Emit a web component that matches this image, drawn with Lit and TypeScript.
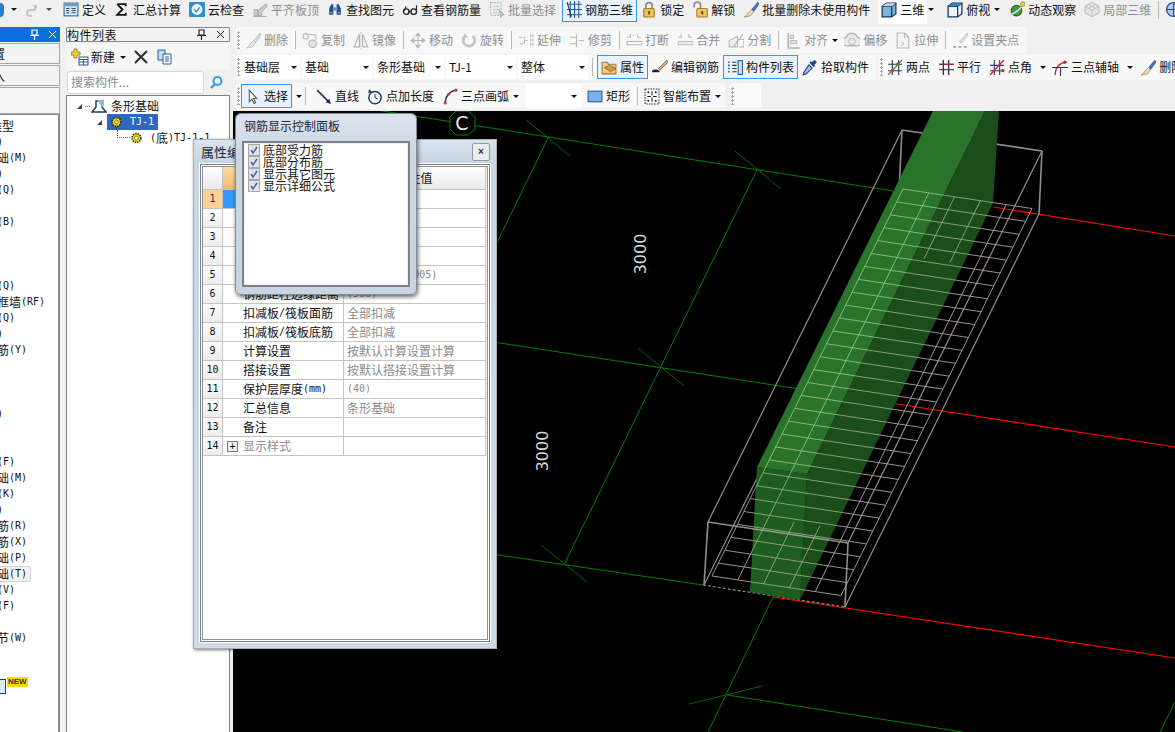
import { LitElement, html, css, svg } from 'lit';
import { customElement } from 'lit/decorators.js';

// 15x16 toolbar icons
const ICONS: Record<string, unknown> = {
  define: svg`<rect x="1" y="2" width="13" height="12" fill="#dce8f4" stroke="#2f5f94"/><rect x="1" y="2" width="13" height="3" fill="#6f9bc8"/><path d="M3 7h3M3 9h3M3 11h3M8 7h4M8 9h4M8 11h4" stroke="#26496f"/>`,
  sigma: svg`<path d="M3 3h8v2M3 3l5 5-5 5h8v-2" fill="none" stroke="#111" stroke-width="1.7"/>`,
  cloud: svg`<rect x="0" y="1" width="15" height="14" rx="1" fill="#2a8ed6"/><circle cx="7.5" cy="8" r="4.6" fill="#e8f4fc" stroke="#fff"/><path d="M5 8l2 2 3-4" fill="none" stroke="#2a8ed6" stroke-width="1.4"/>`,
  level: svg`<path d="M2 14V8h3v6zM6 14V9l7-6 1 2-5 5v4z" fill="#cfd2d0" stroke="#a9adab"/><path d="M1 14.5h13" stroke="#a9adab"/>`,
  binoc: svg`<path d="M2 13V7l2-4h2v10zM9 13V3h2l2 4v6z" fill="#234f9a"/><rect x="6" y="6" width="3" height="3" fill="#6d88b8"/><path d="M3 11h2M10 11h2" stroke="#b7c7e2"/>`,
  glasses: svg`<circle cx="4" cy="10" r="2.6" fill="none" stroke="#222" stroke-width="1.3"/><circle cx="11" cy="10" r="2.6" fill="none" stroke="#222" stroke-width="1.3"/><path d="M6.5 10h2M2 9l2-4M13.6 9V4" stroke="#222"/>`,
  batch: svg`<rect x="1.5" y="1.5" width="10" height="12" fill="#eee" stroke="#b9bcbe" stroke-dasharray="2 1"/><path d="M4 5h6M4 8h6M4 11h6" stroke="#c5c8ca"/><path d="M10 9l4 4-2 .5-1 2z" fill="#d4d6d8" stroke="#aaa"/>`,
  rebar: svg`<path d="M1 3h14M1 8h14M1 13h14M4 0v16M8 0v16M12 0v16" stroke="#1c5aa6" stroke-width="1"/><path d="M1 1l4 14" stroke="#333"/>`,
  lock: svg`<path d="M4.5 7V4.5a3 3 0 0 1 6 0V7" fill="none" stroke="#8a8f94" stroke-width="1.6"/><rect x="2.5" y="7" width="10" height="8" rx="1" fill="#e9c261" stroke="#a97d1c"/><rect x="6.7" y="9.5" width="1.8" height="3" fill="#6b4a10"/>`,
  unlock: svg`<path d="M2 6V4a3 3 0 0 1 6 0v3" fill="none" stroke="#8a8f94" stroke-width="1.6"/><rect x="4.5" y="7" width="10" height="8" rx="1" fill="#e9c261" stroke="#a97d1c"/><rect x="8.7" y="9.5" width="1.8" height="3" fill="#6b4a10"/>`,
  brush: svg`<path d="M14 1l-6 7 2 2 5-7z" fill="#4c74c4" stroke="#2d4c8a" stroke-width=".6"/><path d="M8 8l2 2-3 4-6 1c3-1 3-4 7-7z" fill="#e9d9b8" stroke="#a4855a" stroke-width=".7"/>`,
  cube: svg`<path d="M1 5l4-3h9v10l-4 3H1z" fill="#7fb3dc" stroke="#17365f" stroke-width="1.2"/><path d="M1 5h9v10M10 5l4-3" fill="none" stroke="#17365f" stroke-width="1.2"/><path d="M5 2h9l-4 3H1z" fill="#b7d6ee"/>`,
  cubeo: svg`<path d="M1 5l4-3h9v10l-4 3H1z" fill="#eaf3fa" stroke="#17365f" stroke-width="1.2"/><path d="M1 5h9v10M10 5l4-3" fill="none" stroke="#17365f" stroke-width="1.2"/><path d="M5 2h9l-4 3H1z" fill="#3f84bf"/>`,
  orbit: svg`<circle cx="7" cy="9" r="5" fill="#3f9b3a" stroke="#1d5d1b"/><path d="M1 13C5 12 10 8 14 3" fill="none" stroke="#c9d9ee" stroke-width="1.6"/><circle cx="13" cy="3" r="2.2" fill="#e8d23f" stroke="#8f7d12" stroke-width=".6"/>`,
  local: svg`<path d="M7.5 1l6.5 4v6l-6.5 4L1 11V5z" fill="#e6e6e6" stroke="#bdbdbd"/><path d="M1 5l6.5 4L14 5M7.5 9v6M4 3l7 4M11 3L4 7" fill="none" stroke="#c6c6c6"/>`,
  globe: svg`<circle cx="8" cy="8" r="6.5" fill="#b6cbe8" stroke="#2a4f8f" stroke-width="1.3"/><path d="M8 2v12M2 8h12" stroke="#2a4f8f"/>`,
  gbrush: svg`<path d="M14 1l-6 7 2 2 5-7z" fill="#d9dbdc" stroke="#b2b5b7" stroke-width=".7"/><path d="M8 8l2 2-3 4-6 1c3-1 3-4 7-7z" fill="#e3e4e4" stroke="#b4b6b7" stroke-width=".7"/>`,
  gcopy: svg`<circle cx="3.5" cy="4" r="2.5" fill="none" stroke="#b4b6b8"/><circle cx="10" cy="11" r="3.5" fill="#e4e5e6" stroke="#a9acae"/><path d="M7 2l6 1v4" fill="none" stroke="#b4b6b8"/>`,
  gmirror: svg`<path d="M1 14L6 2v12zM14 14L9 2v12z" fill="#eeeeee" stroke="#b2b5b7"/><path d="M7.5 0v16" stroke="#c3c5c7" stroke-dasharray="2 1"/>`,
  gmove: svg`<path d="M7.5 1v14M1 8h13M7.5 1L5.5 3.5h4zM7.5 15l-2-2.5h4zM1 8l2.500-2v4zM14 8l-2.500-2v4z" fill="#bfc2c4" stroke="#b4b7b9"/>`,
  grotate: svg`<path d="M4 3.500a5.500 5.500 0 1 0 7 0" fill="none" stroke="#c3c5c6" stroke-width="2.600"/><path d="M3 1v4h4z" fill="#bfc1c3"/>`,
  gextend: svg`<path d="M1 5h5v6H1M6 8h4M12 2v12M14 2v12" fill="none" stroke="#b4b7b9" stroke-dasharray="3 1"/>`,
  gtrim: svg`<path d="M1 5h6M1 11h6M7 2v12M9 8h5" fill="none" stroke="#b4b7b9"/>`,
  gbreak: svg`<path d="M4 2v3H1M11 2v3h3M1 9h14v3H1z" fill="none" stroke="#b6b9bb"/><path d="M6 3h3" stroke="#b6b9bb" stroke-dasharray="1 1"/>`,
  gmerge: svg`<path d="M4 2v3H1M11 2v3h3M1 9h14v3H1z" fill="#ececec" stroke="#bcbfc1"/>`,
  gsplit: svg`<path d="M1 14V8l8-4v10z" fill="#ececec" stroke="#b8babc"/><path d="M5 14l9-12M11 7h4v7h-4" fill="none" stroke="#b0b3b5"/>`,
  galign: svg`<path d="M3 1v14h11" fill="none" stroke="#aeb1b3" stroke-width="1.400"/><path d="M5 3h3v3H5zM5 8h6v3H5z" fill="#dfe0e1" stroke="#b8babc"/>`,
  goffset: svg`<path d="M3 13a4 4 0 0 1-1-8 5.500 5.500 0 0 1 10.500 0 4 4 0 0 1-.500 8z" fill="#e8e9e9" stroke="#b3b6b8" stroke-width="1.300"/><circle cx="7.500" cy="9" r="3" fill="none" stroke="#c2c4c6"/>`,
  gstretch: svg`<path d="M2 1h7l4 4v10H2z" fill="#f5f5f5" stroke="#b5b8ba"/><path d="M9 1v4h4M6 9l2 2-2 2" fill="none" stroke="#bcbfc1"/>`,
  ggrip: svg`<path d="M14 1l-7 8 1.500 1.500L15 3z" fill="#dfe0e1" stroke="#b6b9bb" stroke-width=".7"/><path d="M1 14h3M6 14h3M11 14h3" stroke="#a9acae" stroke-width="1.500"/>`,
  props: svg`<path d="M1 3h5l1 2h7v9H1z" fill="#f3cb84" stroke="#9b7a43"/><path d="M3 8l5-2 6 3-5 3z" fill="#c99a3f" stroke="#7c5a1c" stroke-width=".7"/>`,
  edit: svg`<path d="M14 1l-8 8 1.500 1.500L15 3z" fill="#d8b27a" stroke="#6d5530" stroke-width=".7"/><path d="M0 11c3-2 5-1 7 0v1.500H0z" fill="#222"/>`,
  list: svg`<path d="M1 3h2M1 6h2M1 9h2M1 12h2" stroke="#2a5d9e" stroke-width="1.500" stroke-dasharray="1.500 .8"/><path d="M5 3h4M5 6h4M5 9h4M5 12h4" stroke="#333"/><rect x="10.500" y="1.500" width="4" height="13" fill="#cfe0f1" stroke="#2a5d9e"/>`,
  dropper: svg`<path d="M12 1l2 2-2.500 2.500 1 1-1.500 1-4-4 1-1.500 1 1z" fill="#1c3f8a"/><path d="M6.500 5.500l3 3L4 14l-3 1 1-3z" fill="#9cc4ec" stroke="#1c3f8a"/>`,
  twopt: svg`<path d="M1 5h13M1 11h13M5 1v14M11 1v14" stroke="#1f2f55"/><path d="M1 15L14 1" stroke="#c22"/><circle cx="10" cy="5" r="1.600" fill="#3d8a2c"/><circle cx="5" cy="11" r="1.600" fill="#3d8a2c"/>`,
  parallel: svg`<path d="M1 5h14M1 10h14" stroke="#b12a2a" stroke-width="1.300"/><path d="M5 1v14M10 1v14" stroke="#22376a" stroke-width="1.300"/>`,
  angle: svg`<path d="M1 6h13M1 11h13M5 1v14M10 1v14" stroke="#22376a"/><path d="M1 15L14 1" stroke="#d22" stroke-width="1.300"/><circle cx="13" cy="11" r="1.500" fill="#d22"/>`,
  arcaxis: svg`<path d="M3 15C3 8 7 3 14 3" fill="none" stroke="#c22" stroke-width="1.300"/><path d="M0 8h15M8 8v8" stroke="#22376a"/><circle cx="12" cy="3" r="1.500" fill="#d22"/>`,
  cursor: svg`<path d="M4 2v11l2.500-2.500 2 4 1.500-.8-2-3.900H11z" fill="#fff" stroke="#555"/>`,
  line: svg`<path d="M1 2l12 12" stroke="#1f2f55" stroke-width="1.400"/><path d="M14 15l-5-1.500 3.500-3.500z" fill="#1f2f55"/>`,
  ptlen: svg`<circle cx="7.500" cy="9" r="5.800" fill="#fff" stroke="#22376a" stroke-width="1.400"/><path d="M7.500 5.500V9l2.500 1.500" fill="none" stroke="#22376a"/><path d="M2 1l3 3-4 1z" fill="#22376a"/>`,
  arc3: svg`<path d="M3 14C3 8 7 3 13 2" fill="none" stroke="#22376a" stroke-width="1.400"/><circle cx="3" cy="14" r="1.500" fill="#d33"/><circle cx="6" cy="6" r="1.300" fill="#d33"/><circle cx="13" cy="2" r="1.500" fill="#d33"/>`,
  rect: svg`<rect x="1" y="3" width="13" height="10" fill="#7fb0e6" stroke="#2a5aa8"/>`,
  smart: svg`<rect x="1" y="1" width="13" height="14" fill="#fff" stroke="#333" stroke-dasharray="1.500 1"/><path d="M7.500 3v4M7.500 9v4M3 8h3.500M8.500 8H12" stroke="#222"/><circle cx="4" cy="4" r="1" fill="#222"/><circle cx="11" cy="4" r="1" fill="#222"/><circle cx="4" cy="12" r="1" fill="#222"/><circle cx="11" cy="12" r="1" fill="#222"/>`,
  gear: svg`<circle cx="7.500" cy="8" r="6" fill="#f6d80f" stroke="#33330c" stroke-width="2.200" stroke-dasharray="2 1.200"/><circle cx="7.500" cy="8" r="2.600" fill="#fff6a8" stroke="#6b6512"/>`,
};

type Item = { i?: string; t?: string; off?: boolean; sep?: boolean; arrow?: boolean; sel?: boolean; c?: string };

const ROW1: Item[] = [
  { i: 'define', t: '定义', c: 'g1' }, { i: 'sigma', t: '汇总计算' }, { i: 'cloud', t: '云检查' },
  { i: 'level', t: '平齐板顶', off: true }, { i: 'binoc', t: '查找图元' }, { i: 'glasses', t: '查看钢筋量' },
  { i: 'batch', t: '批量选择', off: true }, { i: 'rebar', t: '钢筋三维', sel: true, c: 'm2' },
  { i: 'lock', t: '锁定' }, { i: 'unlock', t: '解锁' }, { i: 'brush', t: '批量删除未使用构件' },
  { i: 'cube', t: '三维', c: 'wht g3' }, { arrow: true }, { i: 'cubeo', t: '俯视', c: 'g9' }, { arrow: true },
  { i: 'orbit', t: '动态观察', c: 'g5' }, { i: 'local', t: '局部三维', off: true }, { sep: true }, { i: 'globe' },
];

const ROW2: Item[] = [
  { i: 'gbrush', t: '删除', off: true, c: 'g4' }, { sep: true }, { i: 'gcopy', t: '复制', off: true },
  { i: 'gmirror', t: '镜像', off: true }, { sep: true }, { i: 'gmove', t: '移动', off: true },
  { i: 'grotate', t: '旋转', off: true }, { sep: true }, { i: 'gextend', t: '延伸', off: true },
  { i: 'gtrim', t: '修剪', off: true }, { sep: true }, { i: 'gbreak', t: '打断', off: true },
  { i: 'gmerge', t: '合并', off: true }, { i: 'gsplit', t: '分割', off: true }, { sep: true },
  { i: 'galign', t: '对齐', off: true }, { arrow: true }, { i: 'goffset', t: '偏移', off: true, c: 'g2' },
  { i: 'gstretch', t: '拉伸', off: true }, { sep: true }, { i: 'ggrip', t: '设置夹点', off: true },
];

const ROW3A: Item[] = [
  { i: 'props', t: '属性', sel: true }, { i: 'edit', t: '编辑钢筋' }, { i: 'list', t: '构件列表', sel: true },
  { i: 'dropper', t: '拾取构件' },
];

const ROW3B: Item[] = [
  { i: 'twopt', t: '两点', c: 'g3' }, { i: 'parallel', t: '平行' }, { i: 'angle', t: '点角' },
  { arrow: true, c: 'g4' }, { i: 'arcaxis', t: '三点辅轴', c: 'g2' }, { arrow: true, c: 'g4' },
  { i: 'brush', t: '删除辅轴', c: 'g3' },
];

const ROW4A: Item[] = [
  { i: 'cursor', t: '选择', sel: true, c: 'first' }, { arrow: true, c: 'g4' }, { sep: true },
  { i: 'line', t: '直线', c: 'g4' }, { i: 'ptlen', t: '点加长度' }, { i: 'arc3', t: '三点画弧' }, { arrow: true },
];

const ROW4B: Item[] = [
  { i: 'rect', t: '矩形' }, { sep: true }, { i: 'smart', t: '智能布置' }, { arrow: true },
];

const COMBOS: [string, number][] = [['基础层', 59], ['基础', 70], ['条形基础', 70], ['TJ-1', 70], ['整体', 70]];

// rows of the clipped module list, keyed by row index; value is [text, right edge]
const NAV: Record<number, [string, number]> = {
  0: ['构件类型', 14], 1: ['柱(Z)', 3], 2: ['筏板基础(M)', 27], 3: ['梁(L)', 3], 4: ['连梁(Q)', 15], 6: ['板(B)', 15],
  10: ['墙(Q)', 15], 11: ['砌体框墙(RF)', 45], 12: ['暗梁(Q)', 15], 13: ['门(M)', 3], 14: ['加筋(Y)', 27], 18: ['窗(C)', 3],
  21: ['基础(F)', 15], 22: ['筏板基础(M)', 27], 23: ['基坑(K)', 15], 24: ['柱(Y)', 3], 25: ['主筋(R)', 27],
  26: ['负筋(X)', 27], 27: ['板基础(P)', 27], 28: ['条形基础(T)', 27], 29: ['承台(V)', 15], 30: ['基础(F)', 15], 32: ['节(W)', 27],
};

const PROPS: [string, string, boolean?][] = [
  ['名称', 'TJ-1'], ['类别', '条形基础'], ['截面宽度(mm)', '(1000)'], ['截面高度(mm)', '(300)'],
  ['受力筋配置', '(0.5+0.5+0.005)'], ['钢筋距柱边缘距离', '(500)'],
  ['扣减板/筏板面筋', '全部扣减'], ['扣减板/筏板底筋', '全部扣减'], ['计算设置', '按默认计算设置计算'],
  ['搭接设置', '按默认搭接设置计算'], ['保护层厚度(mm)', '(40)'], ['汇总信息', '条形基础'], ['备注', ''],
  ['显示样式', '', true],
];

const CHECKS = ['底部受力筋', '底部分布筋', '显示其它图元', '显示详细公式'];

// wrap ascii runs so they sit on the half-width grid of the CJK text
const mix = (text: string) =>
  text.split(/([\x20-\x7e]+)/).map((p) => (/^[\x20-\x7e]+$/.test(p) ? html`<span class="m">${p}</span>` : p));

@customElement('app-root')
export class AppRoot extends LitElement {
  static styles = css`
    :host {
      display: block;
      width: 1175px;
      height: 732px;
      position: relative;
      overflow: hidden;
      background: #f0f0f0;
      color: #111;
      font: 12px/1 'Noto Sans CJK SC', 'Liberation Sans', sans-serif;
    }
    .m { font: 10px/1 'DejaVu Sans Mono', monospace; }
    .ic { width: 16px; height: 17px; flex: none; margin-right: 3px; display: block; }
    .topbar { height: 27px; display: flex; align-items: center; overflow: hidden; padding-bottom: 8px; box-sizing: border-box; }
    .lead { display: grid; grid-template-columns: 11px 13px 22px 16px; align-items: center; flex: none; }
    .lead .stub { width: 4px; height: 14px; background: #2b7bd6; border-radius: 0 4px 4px 0; }
    .lead svg { width: 14px; height: 16px; display: block; }
    .item { display: flex; align-items: center; flex: none; margin-right: 8px; white-space: nowrap; height: 22px; }
    .item.off { color: #8d8f90; }
    .item.g1 { margin-left: 1px; }
    .item.g2 { margin-left: 2px; }
    .item.g3 { margin-left: 3px; }
    .item.g4 { margin-left: 4px; }
    .item.g5 { margin-left: 5px; }
    .item.g9 { margin-left: 9px; }
    .item.wht { background: #fff; box-shadow: 0 0 0 3px #fff; }
    .item.sel { border: 1px solid #3399ee; background: #eaf2fb; padding: 0 3px; margin-left: -4px; margin-right: 4px; }
    .item.sel.m2 { margin-left: -2px; }
    .item.sel.first { margin-left: 0; }
    .arrow { flex: none; width: 0; height: 0; border: 3px solid transparent; border-top-color: #111; border-bottom: 0; margin: 0 4px 0 -4px; }
    .arrow.g4 { margin-left: 0; }
    .lead .arrow { margin: 0; }
    .lead .arrow.dim { border-top-color: #555; }
    .sep { flex: none; width: 1px; height: 18px; background: #b4b6b8; margin: 0 6px 0 -1px; }
    .sep.t { margin: 0 8px 0 2px; }
    .grip { flex: none; width: 3px; height: 18px; margin: 0 1px; background: radial-gradient(circle at 1.500px 1.500px, #a8a8a8 1.200px, transparent 1.400px) 0 0 / 3px 4px; }

    .body { display: flex; height: 705px; }
    .nav { width: 60px; flex: none; display: flex; flex-direction: column; margin-right: 6px; }
    .navtitle { height: 15px; flex: none; background: #0a6fe0; color: #fff; display: flex; align-items: center; justify-content: flex-end; gap: 9px; padding-right: 3px; }
    .navtitle svg, .ptitle svg { width: 9px; height: 11px; display: block; }
    .acc { flex: none; height: 21px; margin-top: 1px; border: 1px solid #a4a8ac; border-left: 0; box-sizing: border-box; background: #f3f3f3; font-size: 12px; overflow: hidden; display: flex; align-items: center; justify-content: flex-end; padding-right: 54px; white-space: nowrap; }
    .acc.last { height: 27px; background: #f7f7f7; }
    .navlist { flex: 1; background: #fff; border-right: 2px solid #878d94; border-top: 1px solid #878d94; padding-top: 3px; overflow: hidden; }
    .navrow { height: 16px; display: flex; align-items: center; justify-content: flex-end; white-space: nowrap; overflow: hidden; }
    .navwrap { position: relative; height: 16px; }
    .navcur { border: 1px solid #d2d2d2; border-left: 0; border-radius: 0 3px 3px 0; background: #f2f2f2; height: 16px; width: 31px; box-sizing: border-box; display: flex; align-items: center; justify-content: flex-end; padding-right: 3px; overflow: hidden; white-space: nowrap; }
    .newrow { display: flex; align-items: flex-start; height: 20px; margin-top: 31px; }
    .newic { width: 5px; height: 13px; margin-top: 2px; background: #d8e8fa; border: 1px solid #28415f; border-left: 0; flex: none; }
    .newtag { background: #ffd800; font: bold 8px/10px 'Liberation Sans', sans-serif; color: #333; padding: 0 1px; margin-left: 1px; }

    .parts { width: 164px; flex: none; display: flex; flex-direction: column; margin-right: 3px; }
    .ptitle { height: 15px; flex: none; border: 1px solid #85898d; box-sizing: border-box; border-radius: 1px; background: #f2f2f2; display: flex; align-items: center; font-size: 12px; letter-spacing: 0.500px; padding-right: 4px; }
    .ptitle span { flex: 1; }
    .ptitle svg { margin-left: 10px; }
    .ptools { height: 26px; flex: none; margin-top: 2px; display: flex; align-items: center; padding-left: 5px; background: #f6f6f6; }
    .ptools svg { display: block; flex: none; }
    .search { flex: none; height: 24px; display: flex; align-items: center; }
    .sbox { margin-left: 1px; width: 137px; height: 23px; box-sizing: border-box; background: #fff; border: 1px solid #d6d9dc; border-radius: 3px; color: #8b8b8b; font-size: 12px; display: flex; align-items: center; padding-left: 3px; }
    .search svg { margin-left: 6px; width: 13px; height: 15px; display: block; }
    .tree { flex: 1; margin-top: 1px; background: #fff; border: 1px solid #7f8488; border-bottom: 0; padding-top: 2px; overflow: hidden; }
    .tnode { height: 16px; display: flex; align-items: center; white-space: nowrap; }
    .tri { width: 0; height: 0; border-style: solid; border-width: 0 0 5px 5px; border-color: transparent transparent #444 transparent; flex: none; }
    .dots { width: 5px; border-top: 1px dotted #777; flex: none; margin: 0 0 0 3px; }
    .n0 { padding-left: 10px; }
    .n0 svg { width: 16px; height: 16px; margin: 0 4px 0 1px; display: block; }
    .n1 { padding-left: 30px; }
    .hl { background: #2f66c0; color: #fff; height: 16px; width: 51px; margin-left: 5px; display: flex; align-items: center; padding-left: 4px; box-sizing: border-box; }
    .hl .ic, .n2 .ic { width: 11px; height: 12px; margin-right: 8px; }
    .n2 { padding-left: 50px; position: relative; }
    .conn { width: 13px; height: 8px; border-left: 1px dotted #666; border-bottom: 1px dotted #666; box-sizing: border-box; flex: none; margin: -8px 1px 0 0; }

    .main { flex: 1; min-width: 0; display: flex; flex-direction: column; }
    .rows { padding-left: 3px; height: 84px; flex: none; display: flex; flex-direction: column; }
    .tb { height: 27px; display: flex; gap: 0; flex: none; margin-bottom: 1px; align-items: stretch; overflow: hidden; }
    .tb:nth-child(2) { margin: -1px 0 2px; }
    .bar { display: flex; align-items: center; background: #f8f8f8; border-radius: 3px; flex: none; height: 26px; }
    .combo { flex: none; height: 24px; background: #fff; display: flex; align-items: center; justify-content: space-between; box-sizing: border-box; padding: 0 3px 0 3px; margin-right: 2px; white-space: nowrap; font-family: 'Noto Sans CJK SC', 'Liberation Sans', sans-serif; }
    .combo .arrow { margin: 0; }
    .combo.free { width: 56px; margin: 0 5px 0 3px; justify-content: flex-end; padding-right: 5px; }
    .spare { width: 24px; height: 24px; background: #fafafa; margin-left: 2px; border-radius: 2px; }
    .canvas { flex: 1; display: block; width: 942px; height: 621px; background: #000; }

    /* floating windows over the canvas */
    .propwin { position: absolute; left: 193px; top: 139px; width: 304px; height: 510px; box-sizing: border-box; background: linear-gradient(#dbe4ee, #c9d6e4 20px, #d0dbe7); border: 1px solid #a6afb8; box-shadow: 1px 1px 3px #0008; padding: 3px 6px 6px 6px; display: flex; flex-direction: column; }
    .phead { height: 21px; flex: none; display: flex; align-items: flex-start; justify-content: space-between; font-size: 13px; color: #1c2a3a; padding-left: 1px; }
    .phead span { padding-top: 2px; }
    .close { width: 18px; height: 18px; box-sizing: border-box; border: 1px solid #8e979f; border-radius: 2px; background: #e9edf1; display: grid; place-items: center; font: bold 10px/1 'Liberation Sans', sans-serif; color: #333; }
    .frame { flex: 1; border: 1px solid #7b8288; padding: 1px; background: #fff; outline: 1px solid #fff; margin-right: 0; display: flex; }
    .frame > .in { flex: 1; border: 1px solid #8b9197; }
    .grid { display: grid; grid-template-columns: 20px 121px 142px; grid-template-rows: 23px; grid-auto-rows: 19px; font-size: 12px; }
    .c { border-right: 1px solid #c4c4c4; border-bottom: 1px solid #c4c4c4; display: flex; align-items: center; white-space: nowrap; overflow: hidden; box-sizing: border-box; }
    .c.num { justify-content: center; background: linear-gradient(#fbfbfb, #ececec); }
    .c.num.on { background: #fcd290; color: #70006a; }
    .c.hd { justify-content: center; background: linear-gradient(#fdfdfd, #eaeaea); }
    .c.hd.on { background: linear-gradient(#f8dca6, #efbd69); }
    .c.name { padding-left: 20px; }
    .c.name.on { background: #3399ff; color: #fff; }
    .c.name.dim { color: #8b8b8b; padding-left: 4px; }
    .c.val { padding-left: 3px; color: #8b8b8b; }
    .plus { width: 9px; height: 9px; border: 1px solid #777; background: #eee; margin-right: 5px; display: grid; place-items: center; font: 10px/9px 'DejaVu Sans Mono', monospace; color: #111; flex: none; }

    .panel { position: absolute; left: 235px; top: 113px; width: 182px; height: 182px; box-sizing: border-box; border: 1px solid #7f8b96; border-radius: 6px; background: linear-gradient(#dbe4ee, #ccd7e3 40px, #c8d4e1); box-shadow: 1px 2px 4px #0009; padding: 0 6px 7px 6px; display: flex; flex-direction: column; }
    .ptxt { height: 27px; flex: none; display: flex; align-items: center; padding: 0 0 3px 2px; box-sizing: border-box; color: #1a2738; }
    .chk { flex: 1; border: 2px solid #7d8287; outline: 1px solid #eef; outline-offset: -3px; background: #fff; padding: 1px 0 0 4px; box-sizing: border-box; }
    .chkrow { height: 12px; display: flex; align-items: center; white-space: nowrap; }
    .box { width: 10px; height: 10px; border: 1px solid #a6a6a6; background: #dfe2e6; margin-right: 3px; flex: none; display: block; }
  `;

  private icon(name: string) {
    return html`<svg class="ic" viewBox="0 0 15 16">${ICONS[name]}</svg>`;
  }

  private items(list: Item[]) {
    return list.map((it) => {
      if (it.sep) return html`<div class="sep"></div>`;
      if (it.arrow) return html`<div class="arrow ${it.c ?? ''}"></div>`;
      const cls = `item ${it.off ? 'off' : ''} ${it.sel ? 'sel' : ''} ${it.c ?? ''}`;
      return html`<div class=${cls}>${it.i ? this.icon(it.i) : ''}${it.t ?? ''}</div>`;
    });
  }

  private nav() {
    const rows = [];
    for (let n = 0; n < 33; n++) {
      const r = NAV[n];
      if (n === 28) {
        rows.push(html`<div class="navwrap"><div class="navcur">${mix(r[0])}</div></div>`);
      } else if (r) {
        rows.push(html`<div class="navrow" style="width:${r[1]}px">${mix(r[0])}</div>`);
      } else {
        rows.push(html`<div class="navrow"></div>`);
      }
    }
    return rows;
  }

  private canvas() {
    // rebar mat, 31 cross bars between the two long sides
    const L = (t: number) => [903 - 191 * t, 189 + 387 * t];
    const P = (t: number, f: number) => {
      const [x, y] = L(t);
      return [x + 129 * f, y + 19.5 * f];
    };
    let d = '';
    for (let n = 0; n <= 30; n++) {
      const [a, b] = P(n / 30, 0);
      const [c, e] = P(n / 30, 1);
      d += `M${a} ${b}L${c} ${e}`;
    }
    const longBar = (f: number, t0: number, t1: number) => {
      const [a, b] = P(t0, f);
      const [c, e] = P(t1, f);
      return `M${a} ${b}L${c} ${e}`;
    };
    for (const f of [0, 0.2, 0.8, 1]) d += longBar(f, 0, 1);
    for (const f of [0.4, 0.6]) d += longBar(f, 0, 0.16) + longBar(f, 0.84, 1);

    return html`<svg class="canvas" viewBox="233 111 942 621">
      <defs>
        <clipPath id="lightFace"><path d="M933 111L757 467 807 474 985 111z" /></clipPath>
        <clipPath id="darkFace"><path d="M985 111L999 111 993 203 800 600 750 592 757 467 807 474z" /></clipPath>
      </defs>
      <g fill="none" stroke="#008000" stroke-width="1">
        <path d="M376 110L893 191M233 302L897 404M233 516L703 585M727 695L963 732" />
        <path d="M548 138L490 257M757 170L565 563M773 597L708 732M1175 702L1160 732" />
        <path d="M526 120L570 156M735 151L781 189M638 348L684 386M541 545L587 582M689 704L762 686" stroke-width=".8" />
        <polygon points="456,111 468,111 475,117 475,129 468,135 456,135 450,129 450,117" fill="#000" />
      </g>
      <text x="462" y="130" text-anchor="middle" fill="#eee" font-family="DejaVu Sans" font-size="19">C</text>
      <g fill="none" stroke="#ff0000" stroke-width="1.200">
        <path d="M993 207L1175 236M897 404L1175 447M773 597L1175 658" />
      </g>
      <g fill="none" stroke="#8e8e8e" stroke-width="1.200">
        <path d="M902 130L708 522M1042 151L848 543M1039 214L845 607M899 192L704 585" />
        <path d="M902 130L1042 151M902 130L899 192M1042 151L1039 214M708 522L704 585M848 543L845 607" stroke-width="1.600" />
        <path d="M703 585L845 607" stroke-dasharray="3 2" stroke="#7f8f7f" />
      </g>
      <path d="${d}" fill="none" stroke="#b0a29c" stroke-width=".9" />
      <path d="M933 111L757 467 807 474 985 111z" fill="#29742a" />
      <path d="M985 111L999 111 993 203 800 600 807 474z" fill="#1a4d1a" />
      <path d="M757 467L807 474 800 600 750 592z" fill="#1e5c20" />
      <path d="${d}" clip-path="url(#darkFace)" fill="none" stroke="#93a888" stroke-width=".9" />
      <path d="${d}" clip-path="url(#lightFace)" fill="none" stroke="#8fbf83" stroke-width=".9" />
      <path d="M708 522L848 543" stroke="#aab4aa" stroke-width="1.500" opacity=".8" />
      <text transform="translate(646 254) rotate(-90)" text-anchor="middle" fill="#d8d8d8" font-family="DejaVu Sans" font-size="16">3000</text>
      <text transform="translate(548 451) rotate(-90)" text-anchor="middle" fill="#d8d8d8" font-family="DejaVu Sans" font-size="16">3000</text>
    </svg>`;
  }

  render() {
    return html`
      <div class="topbar">
        <div class="lead">
          <div class="stub"></div>
          <div class="arrow"></div>
          <svg viewBox="0 0 14 16"><path d="M11 3v5H6a3 3 0 0 0 0 6h2" fill="none" stroke="#c4c7c9" stroke-width="2" /><path d="M8 3h5v4z" fill="#c4c7c9" /></svg>
          <div class="arrow dim"></div>
        </div>
        ${this.items(ROW1)}
      </div>
      <div class="body">
        <div class="nav">
          <div class="navtitle">
            <svg viewBox="0 0 9 11"><path d="M2 1h5v5H2zM0 6.500h9M4.500 7v4" fill="none" stroke="#fff" stroke-width="1.200" /></svg>
            <svg viewBox="0 0 9 11"><path d="M1 2l7 7M8 2L1 9" stroke="#fff" /></svg>
          </div>
          <div class="acc">工程设置</div>
          <div class="acc">绘图输入</div>
          <div class="acc last"></div>
          <div class="navlist">
            ${this.nav()}
            <div class="newrow"><div class="newic"></div><div class="newtag">NEW</div></div>
          </div>
        </div>
        <div class="parts">
          <div class="ptitle">
            <span>构件列表</span>
            <svg viewBox="0 0 9 11"><path d="M2 1h5v5H2zM0 6.500h9M4.500 7v4" fill="none" stroke="#222" stroke-width="1.200" /></svg>
            <svg viewBox="0 0 9 11"><path d="M1 2l7 7M8 2L1 9" stroke="#222" /></svg>
          </div>
          <div class="ptools">
            <svg width="18" height="18" viewBox="0 0 18 18"><path d="M3 1h3v3h3v3H6v3H3V7H0V4h3z" fill="#efd34a" stroke="#a48a1a" /><rect x="8" y="9" width="9" height="8" fill="#fff" stroke="#2a5d9e" /><path d="M8 11.500h9M8 14h9M12.500 11.500V17" stroke="#2a5d9e" /></svg>
            <span class="item" style="margin:0 0 0 2px">新建</span>
            <div class="arrow g4" style="margin:0 7px 0 5px"></div>
            <svg width="16" height="16" viewBox="0 0 16 16"><path d="M2 2l12 12M14 2L2 14" stroke="#333" stroke-width="2.200" /></svg>
            <svg width="16" height="16" viewBox="0 0 16 16" style="margin-left:8px"><path d="M1 1h7v10H1z" fill="#c7dcf3" stroke="#2a5d9e" /><path d="M6 5h8v10H6z" fill="#fff" stroke="#2a5d9e" /><path d="M8 8h4M8 10h4M8 12h4" stroke="#2a5d9e" /></svg>
          </div>
          <div class="search">
            <div class="sbox">搜索构件...</div>
            <svg viewBox="0 0 13 15"><circle cx="7.500" cy="6" r="4" fill="#e6f3fc" stroke="#3d9ad9" stroke-width="2" /><path d="M5 9l-4 4" stroke="#3d9ad9" stroke-width="2.400" /></svg>
          </div>
          <div class="tree">
            <div class="tnode n0">
              <div class="tri"></div><div class="dots"></div>
              <svg viewBox="0 0 16 16"><path d="M1 14l4-5V3h6v6l4 5z" fill="#fff" stroke="#1d3f7c" stroke-width="1.500" /><path d="M6 2h5l2-1v6l-2 2z" fill="#9cb4d6" /></svg>
              条形基础
            </div>
            <div class="tnode n1">
              <div class="tri"></div>
              <div class="hl"><svg class="ic" viewBox="0 0 15 16">${ICONS.gear}</svg>${mix('TJ-1')}</div>
            </div>
            <div class="tnode n2">
              <div class="conn"></div>
              <svg class="ic" viewBox="0 0 15 16">${ICONS.gear}</svg>${mix('(底)TJ-1-1')}
            </div>
          </div>
        </div>
        <div class="main">
          <div class="rows">
            <div class="tb">
              <div class="bar"><div class="grip"></div>${this.items(ROW2)}</div>
            </div>
            <div class="tb">
              <div class="bar">
                <div class="grip"></div>
                ${COMBOS.map(([t, w]) => html`<div class="combo" style="width:${w}px">${t}<div class="arrow"></div></div>`)}
                <div class="sep t"></div>
                ${this.items(ROW3A)}
              </div>
              <div class="bar" style="flex:1;margin-left:1px"><div class="grip" style="margin-left:2px"></div>${this.items(ROW3B)}</div>
            </div>
            <div class="tb">
              <div class="bar">
                <div class="grip"></div>
                ${this.items(ROW4A)}
                <div class="combo free"><div class="arrow"></div></div>
                ${this.items(ROW4B)}
              </div>
              <div class="bar" style="margin-left:5px"><div class="grip"></div><div class="spare"></div></div>
            </div>
          </div>
          ${this.canvas()}
        </div>
      </div>

      <div class="propwin">
        <div class="phead"><span>属性编辑器</span><div class="close">×</div></div>
        <div class="frame"><div class="in"><div class="grid">
          <div class="c hd"></div><div class="c hd on">属性名称</div><div class="c hd">属性值</div>
          ${PROPS.map(([name, val, dim], n) => html`
            <div class="c num ${n === 0 ? 'on' : ''}">${mix(String(n + 1))}</div>
            <div class="c name ${n === 0 ? 'on' : ''} ${dim ? 'dim' : ''}">${dim ? html`<span class="plus">+</span>` : ''}${mix(name)}</div>
            <div class="c val">${mix(val)}</div>
          `)}
        </div></div></div>
      </div>

      <div class="panel">
        <div class="ptxt">钢筋显示控制面板</div>
        <div class="chk">
          ${CHECKS.map((t) => html`<div class="chkrow">
            <svg class="box" viewBox="0 0 10 10"><path d="M2 5l2 3 4-6" fill="none" stroke="#3d5fae" stroke-width="1.500" /></svg>${t}
          </div>`)}
        </div>
      </div>
    `;
  }
}
